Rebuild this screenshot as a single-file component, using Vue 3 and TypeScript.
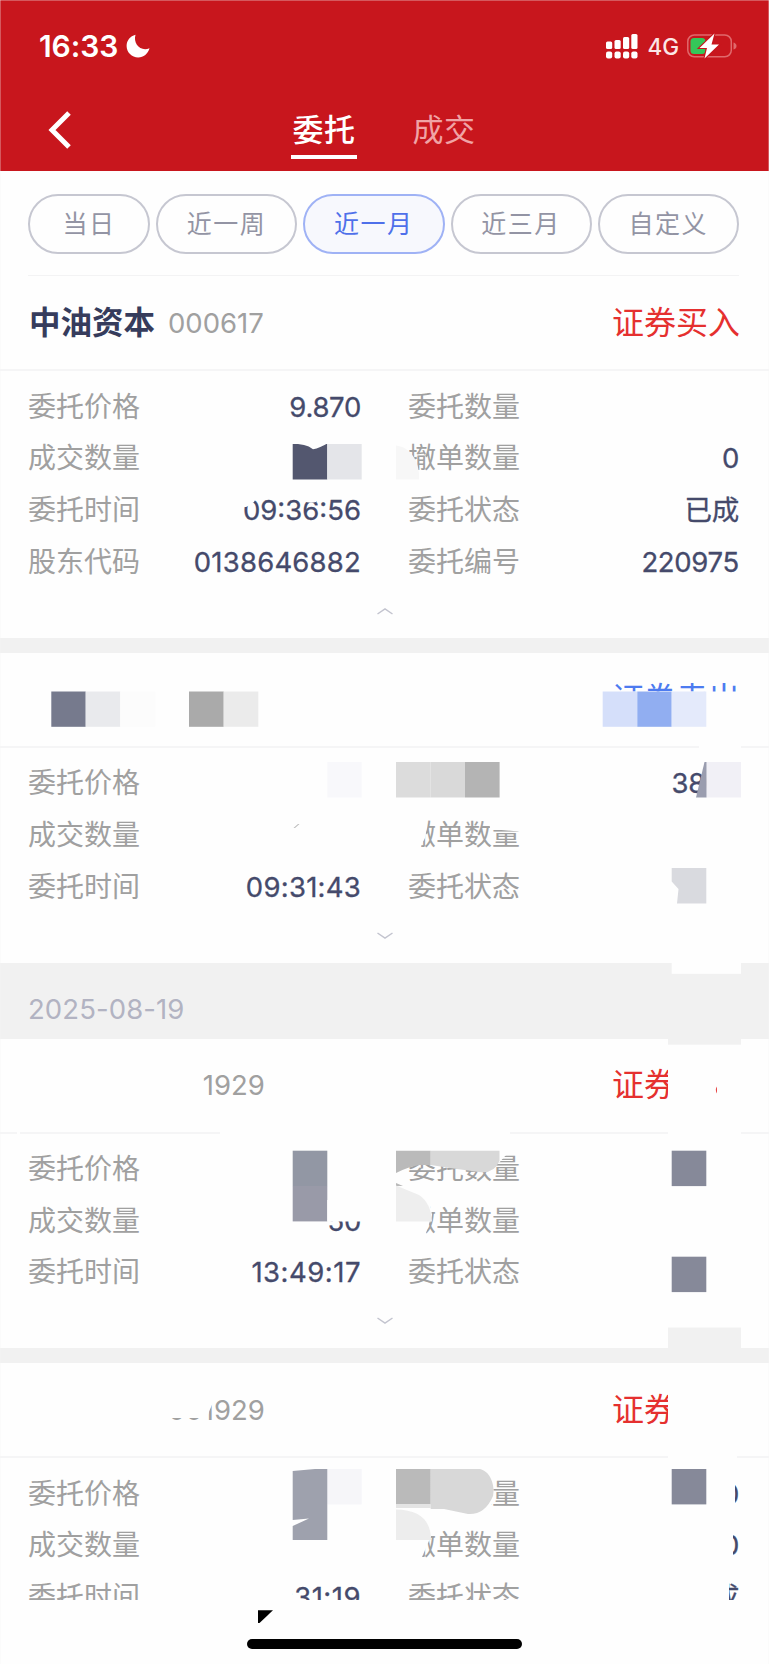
<script setup lang="ts">
interface Field {
  label: string
  value: string
}
interface Order {
  name: string
  code: string
  side: string
  tone: 'buy' | 'sell'
  open: boolean
  fields: Field[]
}

const ranges: { text: string; active?: boolean; short?: boolean }[] = [
  { text: '当日', short: true },
  { text: '近一周' },
  { text: '近一月', active: true },
  { text: '近三月' },
  { text: '自定义' },
]

const first: Order = {
  name: '中油资本', code: '000617', side: '证券买入', tone: 'buy', open: true,
  fields: [
    { label: '委托价格', value: '9.870' }, { label: '委托数量', value: '' },
    { label: '成交数量', value: '' }, { label: '撤单数量', value: '0' },
    { label: '委托时间', value: '09:36:56' }, { label: '委托状态', value: '已成' },
    { label: '股东代码', value: '0138646882' }, { label: '委托编号', value: '220975' },
  ],
}
const second: Order = {
  name: '', code: '', side: '证券卖出', tone: 'sell', open: false,
  fields: [
    { label: '委托价格', value: '' }, { label: '', value: '3800' },
    { label: '成交数量', value: '' }, { label: '撤单数量', value: '' },
    { label: '委托时间', value: '09:31:43' }, { label: '委托状态', value: '' },
  ],
}
const third: Order = {
  name: '', code: '001929', side: '证券', tone: 'buy', open: false,
  fields: [
    { label: '委托价格', value: '' }, { label: '委托数量', value: '' },
    { label: '成交数量', value: '50' }, { label: '撤单数量', value: '' },
    { label: '委托时间', value: '13:49:17' }, { label: '委托状态', value: '' },
  ],
}
const fourth: Order = {
  name: '', code: '001929', side: '证券', tone: 'buy', open: false,
  fields: [
    { label: '委托价格', value: '' }, { label: '委托数量', value: '0' },
    { label: '成交数量', value: '' }, { label: '撤单数量', value: '0' },
    { label: '委托时间', value: '09:31:19' }, { label: '委托状态', value: '已成' },
  ],
}

const groups: { date: string; orders: Order[] }[] = [
  { date: '', orders: [first, second] },
  { date: '2025-08-19', orders: [third, fourth] },
]

// Narrow characters ("1" and ":") get their missing width back as tracking
function tracking(value: string): { letterSpacing: string } {
  const ones = value.split('1').length - 1
  const colons = value.split(':').length - 1
  const base = value.length >= 10 ? 0 : -0.3
  const extra = value.length ? (ones * 2 + colons * 1.2) / value.length : 0
  return { letterSpacing: `${(base + extra).toFixed(2)}px` }
}

// Privacy blocks laid over the list: [x, y, width, height, fill]
const blocks: [number, number, number, number, string][] = [
  [292.7, 444, 34.6, 35.5, '#53576f'], [327.3, 444, 34.4, 35.5, '#e4e5e9'],
  [51.3, 691.5, 34.4, 35.3, '#767a8d'], [85.7, 691.5, 34.6, 35.3, '#e9eaed'], [120.3, 691.5, 35, 35.3, '#fcfcfc'],
  [189, 691.5, 34.7, 35.3, '#aaaaaa'], [223.7, 691.5, 34.6, 35.3, '#ebebeb'],
  [600, 691.5, 142, 40, '#fefefe'], [699, 744, 42, 6, '#fefefe'],
  [602.7, 691.5, 34.6, 35.3, '#d5dffa'], [637.3, 691.5, 34.4, 35.3, '#91aef1'], [671.7, 691.5, 34.6, 35.3, '#e4eafb'],
  [327.3, 762, 34.4, 35.5, '#f8f8fb'],
  [396, 762, 34.6, 35.5, '#dcdcdc'], [430.6, 762, 34.4, 35.5, '#d9d9d9'], [465, 762, 34.6, 35.5, '#b4b4b4'],
  [706.3, 762, 36, 35.5, '#fefefe'], [706.3, 762, 34.7, 35.5, '#f1f0f6'],
  [671.7, 960, 69.3, 13.8, '#fefefe'], [668, 1036, 73, 8.7, '#f1f1f1'],
  [160, 1068, 42.5, 34, '#fefefe'], [668, 1060, 73, 76, '#fefefe'],
  [220, 1129, 290, 6, '#fefefe'], [17, 1129, 3, 6, '#fefefe'],
  [292.7, 1150.7, 34.6, 35.4, '#9297a4'], [292.7, 1186, 34.6, 35.4, '#999aa8'], [327.3, 1200, 36, 21.5, '#fefefe'],
  [671.7, 1150.7, 34.6, 35.4, '#868999'], [671.7, 1256.7, 34.6, 35.4, '#868999'],
  [668, 1327.5, 73, 22, '#f1f1f1'], [668, 1390, 73, 40, '#fefefe'], [668, 1454, 69, 7, '#fefefe'],
  [405, 1475, 86, 34, '#fefefe'], [718, 1475, 17, 36, '#fefefe'], [718, 1528, 15, 36, '#fefefe'],
  [680, 1575, 49, 25, '#fefefe'], [240, 1575, 52, 25, '#fefefe'],
  [671.7, 1469, 34.6, 35.4, '#868999'],
  [327.3, 1469, 34.4, 35.4, '#f6f6f9'],
  [396, 1469, 34.7, 35.4, '#bababa'], [396, 1504.4, 34.7, 3.6, '#e4e4e4'],
]

// Irregular pieces of the same cover layer
const shapes: { d: string; fill: string }[] = [
  { d: 'M292 443L304 445Q309 446 313 449.3Q320 448 328 443Z', fill: '#fefefe' },
  { d: 'M405 452Q414 454 420 480H405Z', fill: '#fefefe' },
  { d: 'M396 445.5C410 447 420 461 419 479.5H396Z', fill: '#f7f7f7' },
  { d: 'M240 496H257L254 502Q249 506 246 507H240Z', fill: '#fefefe' },
  { d: 'M303 498H316V502Q310 504 303 501Z', fill: '#fefefe' },
  { d: 'M704.5 762H706.5V797.5H696Z', fill: '#9a9daf' },
  { d: 'M405 818H427V827L425 838L419 850H405Z', fill: '#fefefe' },
  { d: 'M489 816H524V832L490 829Z', fill: '#fefefe' },
  { d: 'M293.5 828L298 824L299.5 824L295 828Z', fill: '#bbbbbb' },
  { d: 'M671.7 868H706.3V903.5H677L678.5 889L671.7 881.5Z', fill: '#d9dadf' },
  { d: 'M716.8 1086.5Q714.8 1090 717 1093.5Z', fill: '#e5302f' },
  { d: 'M405 1150H512Q507 1153 499 1163H405Z', fill: '#fefefe' },
  { d: 'M396 1150.7H430.7V1165H420Q410 1166 396 1173Z', fill: '#bababa' },
  { d: 'M430.7 1150.7H499.5V1161Q494 1174 479 1172L450 1168L430.7 1165Z', fill: '#d8d8d8' },
  { d: 'M396 1190L420 1195Q431 1200 432 1215L425 1236H396Z', fill: '#fefefe' },
  { d: 'M396 1183L403 1186H396Z', fill: '#bababa' },
  { d: 'M396 1185.5L419 1195Q431 1203 432 1221.5H396Z', fill: '#eeeeee' },
  { d: 'M165 1395H218Q211 1404 207 1418H165Z', fill: '#fefefe' },
  { d: 'M292.7 1471L315 1469H327.3V1540H292.7V1526L309 1518.5L292.7 1520Z', fill: '#9ea1ad' },
  { d: 'M430.7 1469H480C492 1472 495 1488 493 1496Q485 1515 468 1514L444 1509H430.7Z', fill: '#d8d8d8' },
  { d: 'M396 1510H418Q432 1520 432 1534L422 1557H396Z', fill: '#fefefe' },
  { d: 'M396 1509.5Q431 1510 431 1540H396Z', fill: '#ededed' },
  { d: 'M258 1610.3H273L259.5 1623H258Z', fill: '#000000' },
]
</script>

<template>
  <div class="screen">
    <header class="top">
      <div class="status">
        <div class="clock">
          <span>16:33</span>
          <svg class="moon" viewBox="0 0 24 24"><path d="M9.5 .8C6.8 9.6 14.6 18 23.5 14.2C22 19.8 17.6 23.4 12.2 23.4C5.8 23.4 .6 18.4 .6 12C.6 6.6 4.2 2.2 9.5 .8Z" fill="#fff" /></svg>
        </div>
        <div class="signals">
          <svg class="bars" viewBox="0 0 32 25">
            <g fill="#fff">
              <rect x="0" y="7.5" width="6.2" height="7.5" rx="1.5" /><rect x="8.5" y="6" width="6.2" height="9" rx="1.5" />
              <rect x="17" y="3" width="6.2" height="12" rx="1.5" /><rect x="25.3" y="0" width="6.2" height="15" rx="1.5" />
              <rect x="0" y="17.5" width="6.2" height="7" rx="2" /><rect x="8.5" y="17.5" width="6.2" height="7" rx="2" />
              <rect x="17" y="17.5" width="6.2" height="7" rx="2" /><rect x="25.3" y="17.5" width="6.2" height="7" rx="2" />
            </g>
          </svg>
          <span class="net">4G</span>
          <svg class="battery" viewBox="0 0 50 26">
            <rect x=".8" y="2" width="43.5" height="21.8" rx="6.5" fill="none" stroke="#e0696c" stroke-width="1.5" />
            <path d="M46.5 9.5Q49.5 10.5 49.5 13T46.5 16.5Z" fill="#e0696c" />
            <rect x="3.5" y="5" width="15" height="16" rx="3.5" fill="#34c759" />
            <path d="M27.5 .5L12.5 15H20L17.5 25.5L32 11.5H24.5Z" fill="#fff" stroke="#c8161d" stroke-width="2.2" paint-order="stroke" />
          </svg>
        </div>
      </div>
      <nav class="nav">
        <svg class="back" viewBox="0 0 24 40"><path d="M21 3L4 20L21 37" fill="none" stroke="#fff" stroke-width="5" /></svg>
        <div class="tab on">委托</div>
        <div class="tab">成交</div>
      </nav>
    </header>

    <div class="ranges">
      <button v-for="r in ranges" :key="r.text" class="chip" :class="{ active: r.active, short: r.short }">{{ r.text }}</button>
    </div>

    <main class="list">
      <template v-for="(g, gi) in groups" :key="gi">
        <div v-if="g.date" class="date">{{ g.date }}</div>
        <template v-for="(o, oi) in g.orders" :key="oi">
          <div v-if="oi > 0" class="gap"></div>
          <section class="card">
            <div class="title">
              <span class="name">{{ o.name }}</span>
              <span class="code">{{ o.code }}</span>
              <span class="side" :class="o.tone">{{ o.side }}</span>
            </div>
            <div class="fields">
              <div v-for="(f, fi) in o.fields" :key="fi" class="field">
                <span class="label">{{ f.label }}</span>
                <span class="value" :style="tracking(f.value)">{{ f.value }}</span>
              </div>
            </div>
            <div class="toggle">
              <svg viewBox="0 0 16 8" :class="{ up: o.open }"><path d="M.5 1L8 6L15.5 1" fill="none" stroke="#c3c4cf" stroke-width="1.5" /></svg>
            </div>
          </section>
        </template>
      </template>
    </main>

    <footer class="home"><div class="bar"></div></footer>

    <svg class="cover" viewBox="0 0 769 1664">
      <rect v-for="(b, i) in blocks" :key="i" :x="b[0]" :y="b[1]" :width="b[2]" :height="b[3]" :fill="b[4]" />
      <path v-for="(s, i) in shapes" :key="i" :d="s.d" :fill="s.fill" />
      <path d="M0 .5H769M.5 0V1664M768.5 0V1664" stroke="#f4f4f4" stroke-opacity=".3" />
    </svg>
  </div>
</template>

<style>
body {
  margin: 0;
  background: #fefefe;
}
</style>

<style scoped>
.screen {
  position: relative;
  width: 769px;
  height: 1664px;
  overflow: hidden;
  display: flex;
  flex-direction: column;
  background: #fefefe;
  font-family: Inter, "Noto Sans CJK SC", sans-serif;
}
.top {
  flex: none;
  height: 170.5px;
  background: #c8161d;
  color: #fff;
}
.status {
  height: 92px;
  padding: 0 32px 0 39px;
  display: flex;
  justify-content: space-between;
  align-items: center;
}
.clock,
.signals {
  display: flex;
  align-items: center;
}
.clock {
  font-size: 30px;
  font-weight: 600;
  letter-spacing: -0.1px;
}
.moon {
  width: 24px;
  height: 24px;
  margin-left: 8px;
}
.bars {
  width: 32px;
  height: 25px;
}
.net {
  margin: 1px 8px 0 9px;
  font-size: 22.5px;
  font-weight: 500;
  color: #fbe6e6;
}
.battery {
  width: 50px;
  height: 26px;
}
.nav {
  height: 78px;
  display: flex;
  align-items: flex-start;
}
.back {
  width: 24px;
  height: 40px;
  margin: 18px 219px 0 48px;
}
.tab {
  box-sizing: border-box;
  width: 66px;
  height: 67px;
  margin-right: 54px;
  text-align: center;
  font-size: 31px;
  letter-spacing: 0.6px;
  line-height: 76px;
  color: #f0a3a5;
}
.tab.on {
  font-weight: 500;
  color: #fff;
  border-bottom: 4px solid #fff;
}
.ranges {
  flex: none;
  box-sizing: border-box;
  height: 105.8px;
  margin: 0 30px 0 28px;
  padding-top: 23px;
  display: flex;
  gap: 6px;
  border-bottom: 1.5px solid #f3f3f4;
}
.chip {
  box-sizing: border-box;
  flex: 1;
  height: 60px;
  padding: 0;
  border: 2px solid #c6c7d1;
  border-radius: 30px;
  background: transparent;
  font: 400 25px/56px Inter, "Noto Sans CJK SC", sans-serif;
  letter-spacing: 1.5px;
  color: #9394a4;
}
.chip.short {
  flex: none;
  width: 122px;
}
.chip.active {
  border-color: #9fb2f5;
  background: #f7f8fd;
  color: #4f70ea;
}
.list {
  flex: none;
  height: 1323.7px;
  overflow: hidden;
}
.title {
  box-sizing: border-box;
  height: 95.2px;
  padding: 0 29px;
  display: flex;
  align-items: center;
  border-bottom: 2px solid #f5f5f6;
}
.name {
  width: 139px;
  margin-top: -6px;
  font-size: 31.5px;
  font-weight: 700;
  color: #363c5c;
}
.code {
  flex: 1;
  font-size: 27.5px;
  color: #a0a0a0;
}
.side {
  width: 128px;
  margin-top: -6px;
  font-size: 32px;
}
.buy {
  color: #e5302f;
}
.sell {
  color: #4d7bf0;
}
.fields {
  padding: 9.8px 30px 0 28px;
  display: grid;
  grid-template-columns: 333px 331px;
  column-gap: 47px;
}
.field {
  height: 51.8px;
  display: flex;
  justify-content: space-between;
  align-items: center;
  line-height: 51px;
}
.label {
  font-size: 28px;
  color: #a0a0a0;
}
.value {
  font-size: 27.5px;
  -webkit-text-stroke: 0.3px #454a6b;
  color: #454a6b;
}
.toggle {
  height: 49.6px;
  display: flex;
  justify-content: center;
}
.toggle svg {
  width: 16px;
  height: 8px;
  margin-top: 18.5px;
}
.toggle svg.up {
  transform: rotate(180deg);
}
.gap {
  height: 14.7px;
  background: #f1f1f1;
}
.date {
  height: 75.8px;
  padding-left: 28px;
  background: #f1f1f1;
  font-size: 27.5px;
  line-height: 92px;
  letter-spacing: 0.1px;
  color: #b2b3c2;
}
.home {
  flex: 1;
  display: flex;
  justify-content: center;
  align-items: flex-end;
}
.bar {
  width: 275px;
  height: 10px;
  margin-bottom: 15px;
  border-radius: 5px;
  background: #000;
}
.cover {
  position: absolute;
  inset: 0;
  width: 769px;
  height: 1664px;
  pointer-events: none;
}
</style>
